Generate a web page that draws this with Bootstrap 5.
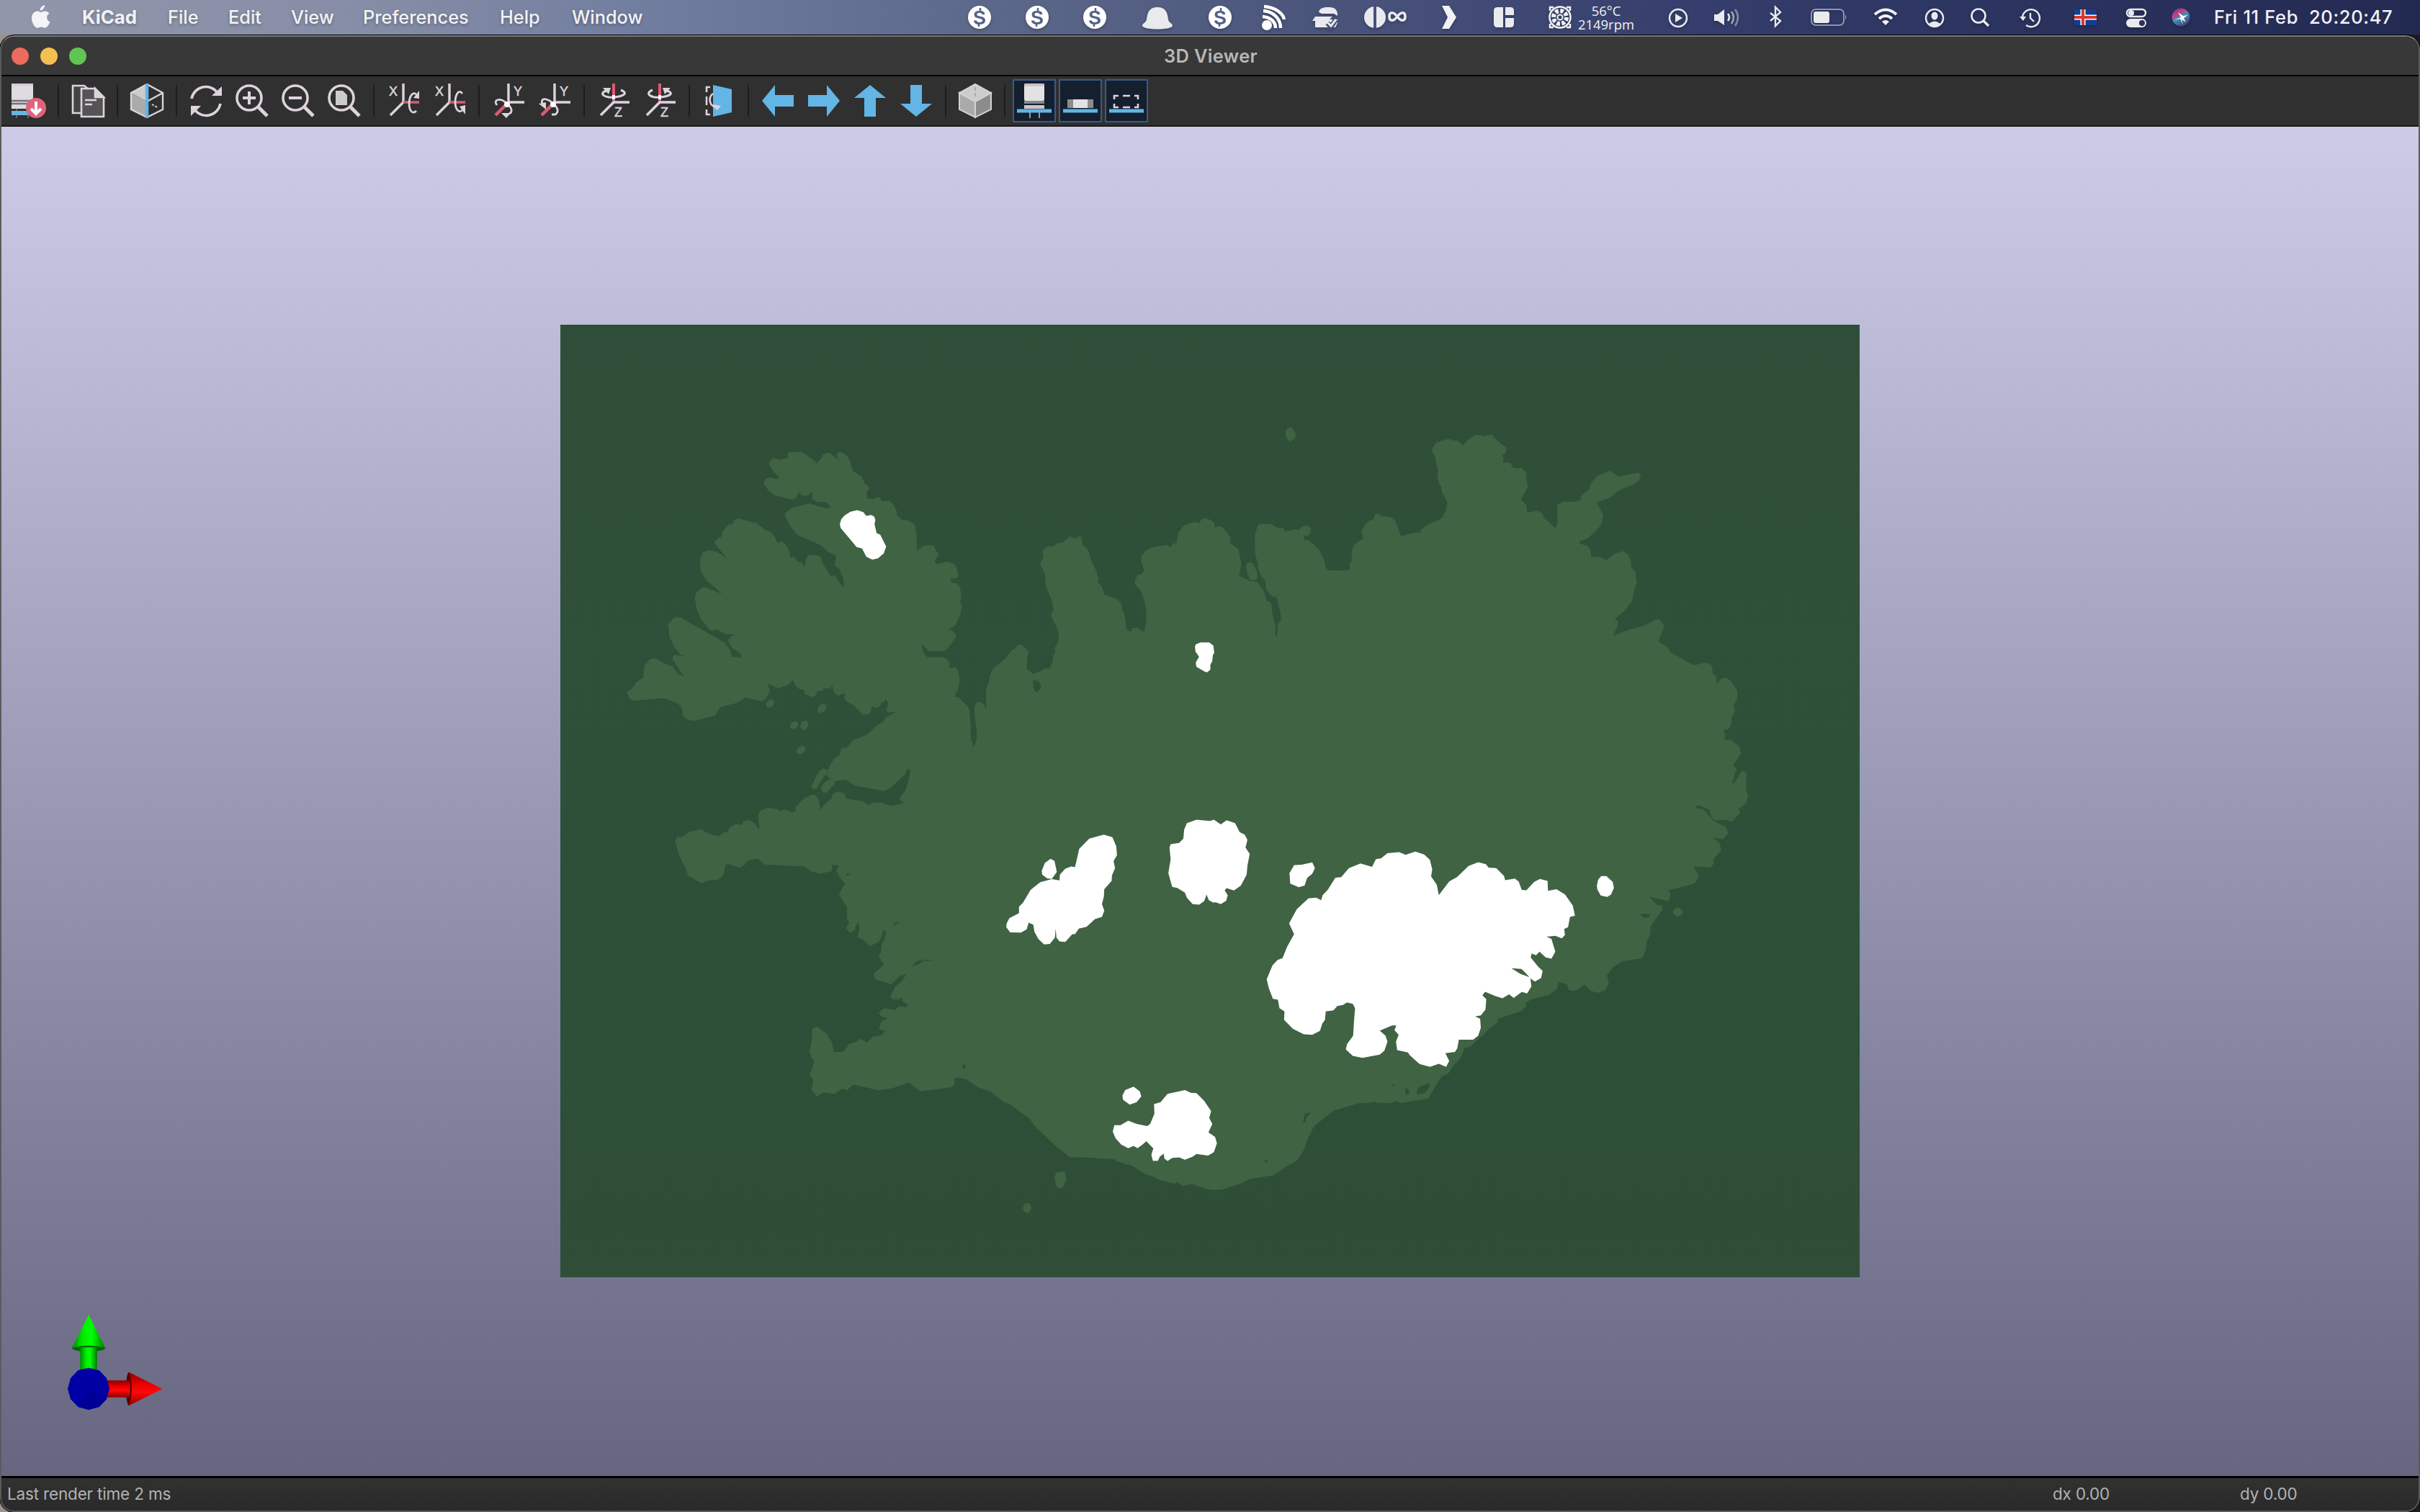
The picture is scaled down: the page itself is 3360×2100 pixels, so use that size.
<!DOCTYPE html>
<html lang="en">
<head>
<meta charset="utf-8">
<title>3D Viewer</title>
<link href="https://cdn.jsdelivr.net/npm/bootstrap@5.3.0/dist/css/bootstrap.min.css" rel="stylesheet">
<style>
html,body{height:100%;margin:0;overflow:hidden}
body{background:linear-gradient(90deg,#9a948d 0,#1c1a20 100%);font-family:Inter,"Liberation Sans",sans-serif;color:#f2f2f5;font-size:26px;line-height:1}
svg{display:block;flex:none;overflow:visible}
.menubar{height:48px;background:linear-gradient(90deg,#9196aa 0,#868da6 500px,#7480a1 840px,#5b6788 1400px,#48527a 1900px,#353e6c 2350px,#2b335f 2800px,#232a52 3360px);white-space:pre}
.menus{width:1338px;padding-left:42px;text-shadow:0 2px 4px rgba(0,0,0,.28)}
.menus span{font-size:25.3px;font-weight:500}
.m-logo{width:72px}.m-app{width:119px}.m-file{width:84px}.m-edit{width:87px}.m-view{width:100px}.m-pref{width:190px}.m-help{width:100px}
.menus .m-app{font-weight:700;font-size:25.8px}
.tray svg{width:44px;height:48px;filter:drop-shadow(0 2px 2px rgba(0,0,0,.25))}
.g18{margin-left:18px}.g19{margin-left:19px}.g23{margin-left:23px}.g24{margin-left:24px}.g26{margin-left:26px}.g28{margin-left:28px}.g30{margin-left:30px}.g33{margin-left:33px}.g34{margin-left:34px}.g35{margin-left:35px}.g36{margin-left:36px}.g41{margin-left:41px}.g42{margin-left:42px}.g43{margin-left:43px}
.fan-text{width:84px;font-size:18.4px;line-height:19px;text-align:center;font-family:"Open Sans","Noto Sans",sans-serif;font-weight:500}
.clock{margin-left:24px;font-size:25.5px;font-weight:500;letter-spacing:.65px}
.app-window{height:2051px;margin-top:1px;border:2px solid #5b5b5b;border-top-color:#7a7a7a;border-radius:20px;background:#2d2d2d;overflow:hidden;box-shadow:0 0 0 1px #000}
.titlebar{height:55px;background:#383838;border-bottom:2px solid #000;padding-left:14px}
.light{width:24px;height:24px;border-radius:50%;margin-right:16px}
.titlebar .win-title{font-size:25.5px;font-weight:600;letter-spacing:.3px;color:#b7b7b7;margin-left:auto;margin-right:auto;transform:translateX(-66px)}
.toolbar3d{height:70px;background:#303030;border-bottom:2px solid #1a1a1a;gap:16px;padding-left:14px}
.toolbar3d svg{width:48px;height:48px}
.sep{width:2px;height:44px;background:#1d1d1d}
.tgl{width:60px;height:60px;margin:0 -6px;background:#151f2e;border:2px solid #3d5a85}
.canvas3d{height:1874px;border-bottom:0;background:linear-gradient(#cccce8,#666680)}
.statusbar{flex:1;background:linear-gradient(#313132,#2a2a2a);border-top:3px solid #000;color:#b2b2b2;font-size:22.5px;padding-left:8px;letter-spacing:-.17px}
.st-main{width:2840px}.st-dx{width:260px}
</style>
<script src="https://cdn.jsdelivr.net/npm/bootstrap@5.3.0/dist/js/bootstrap.bundle.min.js"></script>
</head>
<body>
<!-- shared symbols -->
<svg width="0" height="0" class="position-absolute">
<defs>
<symbol id="skype" viewBox="-22 -24 44 48" overflow="visible"><circle r="16" fill="#fff"/><text y="9.500" text-anchor="middle" font-size="27" font-weight="700" fill="#53618a" font-family="Liberation Sans">S</text><path d="M1-13V-9M-1 9V13" stroke="#53618a" stroke-width="2.500"/></symbol>
<symbol id="rotx" viewBox="0 0 48 48"><path d="M24 0V26L6 44" fill="none" stroke="#ddd3dd" stroke-width="3.4"/><path d="M24 26H46" stroke="#de5b72" stroke-width="3.6"/><text x="4" y="17" font-size="18" fill="#ddd3dd" stroke="#ddd3dd" stroke-width=".5" font-family="Liberation Sans">X</text><path d="M42 15C36 10 32 20 32 28S36 44 42 38" fill="none" stroke="#ddd3dd" stroke-width="2.8"/><path d="M38 20L46 10V21Z" fill="#ddd3dd"/></symbol>
<symbol id="rotx2" viewBox="0 0 48 48"><path d="M24 0V26L6 44" fill="none" stroke="#ddd3dd" stroke-width="3.4"/><path d="M24 26H46" stroke="#de5b72" stroke-width="3.6"/><text x="4" y="17" font-size="18" fill="#ddd3dd" stroke="#ddd3dd" stroke-width=".5" font-family="Liberation Sans">X</text><path d="M42 14C36 6 32 18 32 26S36 42 42 37" fill="none" stroke="#ddd3dd" stroke-width="2.8"/><path d="M38 32L46 43V30Z" fill="#ddd3dd"/></symbol>
</defs>
</svg>
<div class="d-flex flex-column vh-100">
<nav class="menubar d-flex align-items-center">
 <div class="menus d-flex align-items-center">
  <div class="m-logo"><svg width="30" height="34" viewBox="0 0 30 34" fill="#f4f4f6"><path d="M20 0c.4 3.400-2.600 7.600-6.300 7.600C13.300 4.300 16.700.6 20 0zM15 10c1.500 0 3-1.600 5.700-1.600 2.200 0 4.400 1.200 5.800 3.200-5 3-4.200 9.900.9 12-1.400 3.700-4.300 8.200-7 8.200-2 0-2.800-1.200-5.200-1.200S12 31.800 10 31.800C6.400 31.800 2 24.500 2 18.200 2 12 6 8.500 9.800 8.500c2.400 0 3.900 1.500 5.200 1.500z"/></svg></div>
  <span class="m-app">KiCad</span><span class="m-file">File</span><span class="m-edit">Edit</span><span class="m-view">View</span><span class="m-pref">Preferences</span><span class="m-help">Help</span><span>Window</span>
 </div>
 <div class="tray d-flex align-items-center">
  <svg><use href="#skype"/></svg><svg class="g36"><use href="#skype"/></svg><svg class="g36"><use href="#skype"/></svg>
  <svg class="g43" viewBox="-22 -24 44 48"><path d="M0-14C11-14 14-7 15 3C16 8 21 8 21 12C18 18-18 18-21 12C-21 8-16 8-15 3C-14-7-11-14 0-14Z" fill="#e9eaee"/></svg>
  <svg class="g43"><use href="#skype"/></svg>
  <svg class="g30" viewBox="-22 -24 44 48"><g fill="none" stroke="#fff" stroke-width="4.500"><path d="M-15-1C-4 0 3 6 3 15M-14-9C0-8 10 2 10 15M-13-15C4-14 14-4 15 3" /></g><circle cx="-9" cy="11" r="7" fill="#fff"/></svg>
  <svg class="g28" viewBox="-22 -24 44 48"><path d="M-9-7C-8-14 0-14 6-14C13-14 17-10 17-4V-2L12-5H-5ZM-14-1H10L6 3H17V8L14 14H-14V5H-18Z" fill="#e9eaee"/><path d="M3 8L8 13L15 3" fill="none" stroke="#46517a" stroke-width="7"/><path d="M3 7L8 12L15 3" fill="none" stroke="#e9eaee" stroke-width="3"/></svg>
  <svg class="g41" viewBox="-22 -24 44 48"><circle cx="-16" cy="0" r="15" fill="#e9eaee"/><path d="M-16-15V15" stroke="#46517a" stroke-width="4"/><path d="M15-1C9-9 4-7 4-1S9 7 15-1S26-7 26-1S21 7 15-1Z" fill="none" stroke="#e9eaee" stroke-width="3.600"/></svg>
  <svg class="g42" viewBox="-22 -24 44 48"><path d="M-9-16H1L11 0L1 16H-9L-1 0Z" fill="#f2f2f5"/></svg>
  <svg class="g33" viewBox="-22 -24 44 48"><g fill="#e9eaee"><path d="M-9-14H-1V14H-9Q-14 14-14 9V-9Q-14-14-9-14ZM2-14H9Q14-14 14-9V-3H2ZM2 1H14V9Q14 14 9 14H2Z"/></g></svg>
  <svg class="g34" viewBox="-22 -24 44 48" fill="none" stroke="#f2f2f5"><path d="M-14-9V-14H-9M9-14H14V-9M14 9V14H9M-9 14H-14V9" stroke-width="2.500"/><circle r="14.500" stroke-width="2.500"/><circle r="9" stroke-width="6" stroke-dasharray="4.600 2.470"/><circle r="3.500" stroke-width="2"/></svg>
  <div class="fan-text"><div>56°C</div><div>2149rpm</div></div>
  <svg class="g36" viewBox="-22 -24 44 48"><circle cy="1" r="12" fill="none" stroke="#e9eaee" stroke-width="2.500"/><path d="M-4-5L6 1L-4 7Z" fill="#e9eaee"/></svg>
  <svg class="g24" viewBox="-22 -24 44 48"><path d="M-18-4H-13L-4-11V11L-13 5H-18Z" fill="#e9eaee"/><g fill="none" stroke="#e9eaee" stroke-width="2.600"><path d="M1-5Q5 0 1 5"/><path d="M6-8Q12 0 6 9" opacity=".6"/><path d="M11-11Q19 0 11 12" opacity=".45"/></g></svg>
  <svg class="g23" viewBox="-22 -24 44 48"><path d="M-7-6L7 5L0 12V-14L7-7L-7 5" fill="none" stroke="#e9eaee" stroke-width="2.400"/></svg>
  <svg class="g30" viewBox="-22 -24 44 48"><rect x="-24" y="-11" width="45" height="22" rx="6" fill="none" stroke="#9094b0" stroke-width="2"/><rect x="-21" y="-8" width="22" height="16" rx="3" fill="#e9eaee"/><path d="M23-4Q26 0 23 4Z" fill="#9094b0"/></svg>
  <svg class="g35" viewBox="-22 -24 44 48"><g fill="none" stroke="#f2f2f5" stroke-width="4"><path d="M-15-4Q0-17 15-4M-9 2Q0-6 9 2"/></g><path d="M-5 6Q0 2 5 6L0 11Z" fill="#f2f2f5"/></svg>
  <svg class="g24" viewBox="-22 -24 44 48"><circle cy="1" r="12" fill="none" stroke="#e9eaee" stroke-width="2.500"/><ellipse cy="-2" rx="4.500" ry="5.500" fill="#e9eaee"/><path d="M-8 9Q0 2 8 9Q0 16-8 9" fill="#e9eaee"/></svg>
  <svg class="g19" viewBox="-22 -24 44 48"><circle cx="-2" cy="-2" r="9.500" fill="none" stroke="#e9eaee" stroke-width="2.600"/><path d="M5 5L12 12" stroke="#e9eaee" stroke-width="3.400"/></svg>
  <svg class="g26" viewBox="-22 -24 44 48"><path d="M-11 0A12 12 0 1 1-6 11M0-6V1L5 6" fill="none" stroke="#e9eaee" stroke-width="2.400"/><path d="M-15-1H-6L-10 5Z" fill="#e9eaee"/></svg>
  <svg class="g33" viewBox="-22 -24 44 48"><path d="M-16-11H15V11H-16Z" fill="#123e93"/><path d="M-16 0H15M-4-11V11" stroke="#fff" stroke-width="7"/><path d="M-16 0H15M-4-11V11" stroke="#d7382f" stroke-width="4"/></svg>
  <svg class="g26" viewBox="-22 -24 44 48"><rect x="-13" y="-11" width="26" height="10" rx="5" fill="none" stroke="#e9eaee" stroke-width="2.500"/><circle cx="-7" cy="-6" r="4" fill="#e9eaee"/><rect x="-14" y="2" width="28" height="12" rx="6" fill="#e9eaee"/><circle cx="8" cy="8" r="4" fill="#2a315c"/></svg>
  <svg class="g18" viewBox="-22 -24 44 48"><defs><linearGradient id="siri" x1="0" y1="0" x2=".6" y2="1"><stop stop-color="#574a86"/><stop offset=".35" stop-color="#c53d78"/><stop offset=".6" stop-color="#3d8fb5"/><stop offset="1" stop-color="#45407a"/></linearGradient></defs><circle r="12.500" fill="url(#siri)"/><path d="M-10 4L0 0L-4-7L3-2L10-3L4 1L7 7L1 3L3 11L-1 2Z" fill="#eafcff"/></svg>
  <div class="clock">Fri 11 Feb  20:20:47</div>
 </div>
</nav>
<main class="app-window d-flex flex-column">
 <header class="titlebar d-flex align-items-center"><i class="light" style="background:#ed6a5e"></i><i class="light" style="background:#f5bf4f"></i><i class="light" style="background:#61c554"></i><div class="win-title">3D Viewer</div></header>
 <div class="toolbar3d d-flex align-items-center">
  <svg viewBox="0 0 48 48"><path d="M0 0H30V35H0Z" fill="#dedcde"/><path d="M0 0H30V3H0Z" fill="#d5cbd5"/><path d="M0 24H30M0 28H30" stroke="#77707a" stroke-width="2.500"/><path d="M7 35V48M23 35V48" stroke="#777" stroke-width="1.500"/><path d="M0 38H30V44H0Z" fill="#62b5e5"/><circle cx="34" cy="34" r="14" fill="#e0637c"/><path d="M34 25V41M27 35L34 42L41 35" fill="none" stroke="#fff" stroke-width="4"/></svg><div class="sep"></div>
  <svg viewBox="0 0 48 48" stroke="#ddd3dd" stroke-width="2.600"><path d="M3 3H19L25 8V41H3Z" fill="#444"/><path d="M15 7H34L46 19V46H15Z" fill="#545454"/><path d="M34 7V19H46Z" fill="#ddd3dd"/><path d="M20 23H36M20 29H30"/></svg><div class="sep"></div>
  <svg viewBox="0 0 48 48"><path d="M24 1L2 13L24 25Z" fill="#ccc"/><path d="M2 13V36L24 47V25Z" fill="#ababab"/><path d="M24 1L46 13V36L24 47M24 25L46 13M24 1L2 13V36L24 47" fill="none" stroke="#ddd3dd" stroke-width="2.400"/><path d="M31 29L38 33" stroke="#ddd3dd" stroke-width="2" stroke-dasharray="3 2"/><path d="M24 0V48" stroke="#62b5e5" stroke-width="4.500"/></svg><div class="sep"></div>
  <svg viewBox="0 0 48 48"><path d="M4 21A20 20 0 0 1 40 13M44 28A20 20 0 0 1 8 36" fill="none" stroke="#ddd3dd" stroke-width="3.600"/><path d="M46 4V17H32ZM3 45V31H17Z" fill="#ddd3dd"/></svg>
  <svg viewBox="0 0 48 48" fill="none" stroke="#ddd3dd" stroke-width="3.600"><circle cx="20" cy="20" r="17"/><path d="M32 32L45 45" stroke-width="5"/><path d="M11 20H29M20 11V29" stroke-width="4"/></svg>
  <svg viewBox="0 0 48 48" fill="none" stroke="#ddd3dd" stroke-width="3.600"><circle cx="20" cy="20" r="17"/><path d="M32 32L45 45" stroke-width="5"/><path d="M11 20H29" stroke-width="4"/></svg>
  <svg viewBox="0 0 48 48" fill="none" stroke="#ddd3dd" stroke-width="3.600"><circle cx="20" cy="20" r="17"/><path d="M32 32L45 45" stroke-width="5"/><path d="M12 10H22L28 16V30H12Z" fill="#ccc" stroke="none"/></svg><div class="sep"></div>
  <svg><use href="#rotx"/></svg><svg><use href="#rotx2"/></svg><div class="sep"></div>
  <svg viewBox="0 0 48 48"><path d="M24 0V26H46" fill="none" stroke="#ddd3dd" stroke-width="3.400"/><path d="M24 26L6 44" stroke="#de5b72" stroke-width="4.500"/><text x="31" y="17" font-size="18" fill="#ddd3dd" stroke="#ddd3dd" stroke-width=".5" font-family="Liberation Sans">Y</text><path d="M8 30C2 22 12 20 20 26S31 39 25 42" fill="none" stroke="#ddd3dd" stroke-width="2.800"/><path d="M14 41H27L21 48Z" fill="#ddd3dd"/><circle cx="22" cy="29" r="4" fill="#fff"/></svg>
  <svg viewBox="0 0 48 48"><path d="M24 0V26H46" fill="none" stroke="#ddd3dd" stroke-width="3.400"/><path d="M24 26L6 44" stroke="#de5b72" stroke-width="4.500"/><text x="31" y="17" font-size="18" fill="#ddd3dd" stroke="#ddd3dd" stroke-width=".5" font-family="Liberation Sans">Y</text><path d="M7 28C4 20 12 20 20 26S31 39 25 43H20" fill="none" stroke="#ddd3dd" stroke-width="2.800"/><path d="M2 28L12 26V36Z" fill="#ddd3dd"/><circle cx="22" cy="29" r="4" fill="#fff"/></svg><div class="sep"></div>
  <svg viewBox="0 0 48 48"><path d="M24 0V26" stroke="#de5b72" stroke-width="4"/><path d="M46 26H24L6 44" fill="none" stroke="#ddd3dd" stroke-width="3.600"/><text x="25" y="46" font-size="18" fill="#ddd3dd" stroke="#ddd3dd" stroke-width=".5" font-family="Liberation Sans">Z</text><path d="M14 10C2 14 12 20 24 19S46 14 34 9" fill="none" stroke="#ddd3dd" stroke-width="3"/><path d="M9 6H20L17 15Z" fill="#ddd3dd"/><path d="M24 16V22" stroke="#fff" stroke-width="4"/></svg>
  <svg viewBox="0 0 48 48"><path d="M24 0V26" stroke="#de5b72" stroke-width="4"/><path d="M46 26H24L6 44" fill="none" stroke="#ddd3dd" stroke-width="3.600"/><text x="25" y="46" font-size="18" fill="#ddd3dd" stroke="#ddd3dd" stroke-width=".5" font-family="Liberation Sans">Z</text><path d="M14 9C2 14 12 20 24 19S46 14 34 10" fill="none" stroke="#ddd3dd" stroke-width="3"/><path d="M39 6H28L31 15Z" fill="#ddd3dd"/><path d="M24 16V22" stroke="#fff" stroke-width="4"/></svg><div class="sep"></div>
  <svg viewBox="0 0 48 48"><path d="M16 2L42 8V40L16 46Z" fill="#62b5e5"/><path d="M12 5H7V12M7 18V30M7 36V43H12" fill="none" stroke="#ddd3dd" stroke-width="2.600"/><path d="M16 14C10 18 10 28 17 32" fill="none" stroke="#ddd3dd" stroke-width="2.600"/><path d="M16 29L27 31L22 37L18 34Z" fill="#ddd3dd"/></svg><div class="sep"></div>
  <svg viewBox="0 0 48 48"><path d="M2 24L20 2V16H46V32H20V46Z" fill="#62b5e5"/></svg>
  <svg viewBox="0 0 48 48"><path d="M46 24L28 2V16H2V32H28V46Z" fill="#62b5e5"/></svg>
  <svg viewBox="0 0 48 48"><path d="M24 2L46 20H32V46H16V20H2Z" fill="#62b5e5"/></svg>
  <svg viewBox="0 0 48 48"><path d="M24 46L46 28H32V2H16V28H2Z" fill="#62b5e5"/></svg><div class="sep"></div>
  <svg viewBox="0 0 48 48" stroke="#d8d0d8" stroke-width="2"><path d="M24 1L46 13L24 25L2 13Z" fill="#ccc"/><path d="M2 13L24 25V47L2 36Z" fill="#aaa"/><path d="M46 13L24 25V47L46 36Z" fill="#8c8c8c"/><path d="M24 5V18M9 32L18 27" stroke="#aaa" stroke-dasharray="5 3"/></svg><div class="sep"></div>
  <div class="tgl d-flex align-items-center justify-content-center"><svg viewBox="0 0 48 48"><rect x="10" width="28" height="24" rx="2" fill="#e2e2e2"/><path d="M10 2H38" stroke="#c8bfc8" stroke-width="3"/><path d="M10 26H38" stroke="#888" stroke-width="4"/><path d="M10 30H38V35H10Z" fill="#ccc5cc"/><path d="M18 40V48M31 40V48" stroke="#999" stroke-width="2"/><path d="M0 38H48" stroke="#62b5e5" stroke-width="5"/></svg></div>
  <div class="tgl d-flex align-items-center justify-content-center"><svg viewBox="0 0 48 48"><path d="M6 22H42V34H6Z" fill="#8d8d8d"/><path d="M14 22H34V34H14Z" fill="#e2e2e2"/><path d="M0 38H48" stroke="#62b5e5" stroke-width="5"/></svg></div>
  <div class="tgl d-flex align-items-center justify-content-center"><svg viewBox="0 0 48 48"><path d="M7 22V17H13M19 17H29M35 17H40V22M40 28V33H35M29 33H19M13 33H7V28" fill="none" stroke="#ddd3dd" stroke-width="2.600"/><path d="M0 38H48" stroke="#62b5e5" stroke-width="5"/></svg></div>
 </div>
 <div class="canvas3d">
 <svg width="3356" height="1874" viewBox="2 176 3356 1874">
  <defs>
   <linearGradient id="pcb" x1="0" y1="0" x2="0" y2="1"><stop stop-color="#2f4e39"/><stop offset=".5" stop-color="#2e5038"/><stop offset=".75" stop-color="#2d4f38"/><stop offset="1" stop-color="#2f4d37"/></linearGradient>
   <linearGradient id="gcone"><stop stop-color="#008a00"/><stop offset=".35" stop-color="#00ee00"/><stop offset=".6" stop-color="#00ff00"/><stop offset="1" stop-color="#007a00"/></linearGradient>
   <linearGradient id="rcone" x1="0" y1="0" x2="0" y2="1"><stop stop-color="#900000"/><stop offset=".4" stop-color="#f00000"/><stop offset=".6" stop-color="#ff0808"/><stop offset="1" stop-color="#900000"/></linearGradient>
  </defs>
  <path d="M778 451H2582V1774H778Z" fill="url(#pcb)"/>
  <g fill="#406343">
   <!-- north-west fjords -->
   <g transform="translate(860 560) scale(.35714 .38265)">
    <path d="M560 290L571 273 585 270 616 276 620 266 600 250 582 222 584 212 597 201 610 201 622 206 656 198 653 185 661 178 710 178 730 190 748 201 767 219 787 198 788 190 803 180 819 181 845 201 857 208 848 199 845 182 850 178 866 179 884 190 898 213 907 245 940 264 955 294 965 297 971 310 960 326 966 347 989 348 1003 340 1014 345 1020 357 1049 353 1063 366 1080 395 1077 406 1100 424 1113 422 1146 438 1155 470 1156 536 1182 518 1209 514 1224 518 1231 535 1242 548 1224 573 1234 584 1275 575 1300 583 1313 600 1317 628 1310 635 1286 637 1293 652 1308 652 1322 664 1330 695 1325 722 1333 736 1325 768 1308 803 1296 814 1281 819 1298 828 1311 846 1300 862 1275 892 1260 901 1202 899 1188 886 1180 876 1176 885 1186 912 1197 922 1260 922 1275 930 1284 945 1282 962 1306 958 1316 966 1323 1005 1316 1040 1302 1065 1320 1068 1335 1083 1356 1103 1362 1117 1365 1160 1367 1220 1377 1252 1390 1220 1389 1190 1380 1130 1380 1105 1388 1087 1400 1084 1415 1090 1428 1112 1425 1080 1425 1035 1434 1022 1440 990 1455 963 1500 930 1523 900 1540 888 1548 877 1568 878 1568 1250 888 1250 910 1221 955 1210 1000 1170 1028 1154 1033 1143 1078 1120 1047 1123 1036 1113 1047 1090 1034 1073 1030 1083 1017 1088 1014 1098 1000 1106 983 1100 975 1122 963 1130 946 1130 915 1100 880 1080 875 1068 877 1052 850 1062 833 1050 828 1024 818 1036 797 1034 790 1043 768 1045 765 1060 750 1067 722 1056 718 1040 700 1038 680 1020 678 1010 671 1006 658 1022 617 1035 590 1025 577 1017 585 1045 568 1075 553 1082 490 1068 458 1088 400 1100 388 1108 372 1134 290 1153 268 1150 247 1134 245 1112 228 1090 173 1070 60 1079 42 1076 28 1050 52 1032 63 1015 92 996 96 955 118 930 138 926 184 948 205 955 230 983 252 992 235 970 207 930 208 917 218 914 260 920 238 913 218 892 194 848 191 815 188 803 215 776 240 779 408 868 432 897 438 923 452 920 473 925 472 910 440 890 424 868 424 855 445 841 480 840 412 838 377 821 358 826 345 818 315 780 300 745 293 705 298 690 320 669 335 669 393 690 418 711 370 668 340 645 315 608 314 565 325 540 350 533 380 540 418 562 375 515 370 505 385 488 397 485 400 470 420 443 442 437 445 425 462 418 532 435 570 462 585 465 605 487 613 507 630 501 645 510 662 540 664 560 680 558 692 575 706 577 720 597 725 565 738 550 775 552 785 562 787 575 820 626 840 626 858 655 873 667 870 635 855 602 836 588 843 554 808 538 785 516 693 479 665 448 650 420 641 401 670 380 735 364 808 382 823 377 805 360 765 357 748 347 751 322 730 336 708 335 698 323 686 345 672 350 602 334 580 318Z"/>
    <ellipse cx="586" cy="1090" rx="17" ry="13" transform="rotate(-40 586 1090)"/><ellipse cx="787" cy="1108" rx="19" ry="14" transform="rotate(-40 787 1108)"/><ellipse cx="679" cy="1169" rx="17" ry="13" transform="rotate(-35 679 1169)"/><ellipse cx="719" cy="1169" rx="18" ry="14" transform="rotate(-50 719 1169)"/><ellipse cx="706" cy="1259" rx="18" ry="13" transform="rotate(-35 706 1259)"/>
    <path d="M745 1388L757 1374 762 1358 780 1332 795 1325 809 1333 805 1348 795 1356 775 1383 773 1394 762 1401 750 1399ZM785 1390L797 1376 815 1366 838 1371 836 1383 818 1400 808 1413 792 1413 785 1402Z"/>
   </g>
   <!-- north coast -->
   <g transform="translate(1330 580) scale(.38265 .33333)">
    <path d="M115 1080L128 1045 170 1005 195 970 210 961 213 950 225 945 243 958 254 970 256 985 252 995 250 1048 260 1055 271 1068 300 1057 316 1045 333 1044 343 1020 346 990 353 980 351 960 364 935 366 905 357 870 340 832 339 815 348 803 340 760 320 705 315 650 298 612 311 575 306 555 325 536 347 537 365 521 380 521 405 495 428 503 435 495 447 497 453 530 472 550 485 600 503 640 505 658 511 668 508 683 525 710 531 737 550 745 575 755 592 770 597 802 605 825 612 880 618 888 629 890 635 877 655 876 667 890 678 890 684 830 680 780 665 725 643 695 643 675 652 657 668 650 676 637 665 600 665 580 680 555 705 540 757 530 771 540 780 527 792 521 800 480 820 450 860 434 877 440 880 430 895 417 920 428 932 440 932 459 945 453 960 457 990 500 988 522 1018 550 1029 610 1020 659 1060 680 1085 684 1110 722 1120 762 1137 773 1143 830 1152 865 1152 908 1158 915 1160 862 1172 845 1170 810 1158 755 1150 745 1142 747 1117 715 1115 678 1102 665 1087 625 1089 610 1079 575 1077 490 1089 447 1097 443 1140 444 1158 458 1180 460 1188 475 1225 465 1240 469 1245 456 1265 450 1280 458 1280 480 1268 494 1255 492 1257 510 1275 512 1310 550 1328 590 1335 628 1347 637 1415 637 1422 630 1421 610 1428 600 1430 550 1440 527 1470 503 1465 475 1475 450 1490 432 1508 423 1512 405 1522 401 1535 411 1568 415V1700H400V1400H130Z"/>
    <path d="M1189 55L1198 42 1212 42 1227 68 1224 85 1208 99 1197 93 1189 72ZM1045 620L1050 605 1060 602 1073 610 1087 650 1086 670 1075 678 1060 675 1050 650Z"/>
   </g>
   <!-- east -->
   <g transform="translate(1900 580) scale(.35714 .54847)">
    <path d="M0 262L20 257 25 247 38 243 50 250 90 253 105 262 127 300 190 290 205 293 203 285 225 273 287 255 300 238 307 218 300 205 285 188 283 175 275 168 268 150 270 130 263 118 260 98 247 88 250 75 262 64 310 54 328 58 345 58 370 71 378 62 400 50 420 43 450 47 478 43 515 66 538 77 533 90 521 94 525 103 522 113 550 114 563 127 597 128 613 140 615 160 621 175 592 208 615 222 617 240 655 236 678 243 681 255 700 263 725 280 735 270 734 222 755 213 805 213 824 209 830 196 858 182 863 168 890 147 940 135 975 149 1050 139 1059 147 1052 158 1030 170 980 182 940 202 887 215 913 247 908 267 895 280 855 305 822 313 820 319 850 324 865 337 865 352 900 354 925 361 960 343 990 338 1010 348 1020 362 1022 380 1038 390 1043 420 1036 430 1025 465 995 490 957 510 970 515 970 525 952 552 1010 538 1070 527 1115 512 1130 511 1152 527 1127 567 1165 583 1172 593 1265 627 1315 620 1335 628 1339 648 1352 657 1354 676 1370 662 1388 658 1405 664 1434 690 1434 710 1420 728 1424 745 1412 760 1410 777 1400 788 1380 792 1387 803 1385 815 1410 817 1440 832 1449 850 1418 880 1432 890 1422 905 1422 915 1413 917 1419 928 1450 897 1460 895 1470 902 1468 943 1476 958 1468 977 1440 990 1444 1002 1412 1023 1380 1018 1350 1021 1335 1012 1325 993 1280 981 1268 989 1300 991 1345 1022 1390 1038 1399 1053 1378 1068 1340 1063 1365 1078 1372 1095 1342 1117 1342 1130 1330 1139 1265 1137 1285 1162 1268 1180 1165 1197 1174 1205 1170 1223 1155 1223 1093 1213 1122 1235 1138 1235 1144 1245 1098 1287 1095 1310 1080 1330 1080 1345 1068 1365 1055 1370 985 1377 950 1393 927 1412 935 1435 920 1450 895 1456 865 1450 840 1434 810 1450 780 1450 777 1433 738 1428 728 1443 705 1458 610 1478 613 1490 590 1503 500 1523 503 1530 465 1550 440 1568H0Z"/>
    <path d="M1183 1250L1193 1241 1212 1242 1223 1251 1216 1261 1202 1264 1186 1257Z"/>
   </g>
   <!-- west and south-west -->
   <g transform="translate(860 1020) scale(.44643 .43367)">
    <path d="M772 0L725 20 708 43 690 45 685 65 670 75 655 98 648 115 645 130 655 143 667 150 705 145 730 163 820 181 838 175 892 125 893 112 905 113 903 132 890 178 870 205 884 220 852 228 830 224 815 218 785 219 778 227 755 214 705 205 700 190 685 184 665 188 658 208 640 222 625 243 620 210 610 195 600 192 575 205 548 232 548 245 537 251 515 239 498 247 493 240 462 235 440 243 431 260 436 302 428 298 425 288 405 274 385 278 382 290 362 287 345 297 335 313 322 315 313 326 285 321 252 303 215 313 193 330 180 328 173 343 187 390 207 430 213 452 255 477 280 467 307 466 323 452 330 417 340 416 375 427 390 418 398 404 430 398 453 417 575 423 600 440 625 446 660 438 662 417 683 420 675 437 690 465 703 477 690 497 683 513 708 555 708 590 715 603 705 620 718 637 733 625 735 612 742 602 747 620 740 650 757 657 778 678 805 666 815 650 820 628 830 630 825 655 815 675 813 700 806 713 823 737 790 768 795 785 845 800 875 772 892 768 880 788 857 808 843 838 848 848 865 850 880 842 880 855 897 863 893 874 870 870 858 882 822 877 806 892 813 903 834 909 815 920 807 940 815 948 827 948 818 963 790 968 770 987 750 974 735 985 715 991 697 1017 668 1017 660 985 645 960 615 935 600 943 597 990 590 1017 605 1048 598 1075 591 1090 603 1107 597 1138 615 1160 633 1147 668 1151 695 1134 708 1140 727 1122 808 1140 850 1133 900 1115 937 1143 1035 1130 1044 1115 1040 1102 1060 1100 1080 1105 1115 1130 1155 1145 1200 1180 1210 1181 1275 1230 1290 1253 1330 1292 1350 1312 1400 1354 1445 1355 1535 1360 1568 1374V0H1113L1112 15 1101 43 1093 15V0Z"/>
    <path d="M1353 1420L1358 1404 1380 1400 1387 1405 1389 1427 1380 1450 1368 1455 1358 1445ZM1254 1517L1262 1502 1276 1502 1281 1515 1278 1528 1268 1533 1259 1529Z"/>
   </g>
   <!-- south -->
   <g transform="translate(1380 1120) scale(.53571 .35714)">
    <path d="M0 1120L30 1153 38 1155 95 1213 110 1245 145 1295 195 1363 233 1364 310 1371 320 1382 357 1397 392 1430 410 1438 430 1453 470 1467 475 1461 490 1476 512 1468 555 1489 570 1492 590 1490 635 1469 665 1448 725 1434 760 1398 785 1378 803 1338 815 1287 830 1243 880 1184 945 1154 975 1153 985 1148 995 1153 1030 1154 1040 1146 1057 1153 1125 1136 1140 1100 1160 1050 1177 1040 1187 1015 1210 978 1220 940 1235 935 1255 905 1270 880 1305 840 1307 825 1365 797 1378 780 1375 765 1395 750 1440 732 1460 708 1463 682 1485 692 1490 712 1500 718 1520 705 1530 692 1548 718 1568 725V0H0Z"/>
   </g>
  </g>
  <g fill="#2e5038">
   <path transform="translate(1380 1120) scale(.53571 .35714)" d="M1066 1090L1076 1105 1075 1120 1066 1119ZM1097 1098L1110 1085 1130 1077 1128 1095 1113 1117 1097 1120ZM806 1195L821 1190 808 1215 808 1230 801 1228ZM697 1370L710 1380 706 1386ZM1031 1082L1038 1080 1035 1090Z"/>
   <path transform="translate(1900 580) scale(.35714 .54847)" d="M1055 1256L1095 1257 1090 1264 1072 1268ZM1310 1056L1325 1058 1315 1058Z"/>
   <path transform="translate(860 1020) scale(.44643 .43367)" d="M702 447L718 446 716 450 708 452ZM845 618L860 601 875 601 862 607ZM908 742L925 726 950 721 985 725 945 725 928 738ZM1065 1066L1076 1053 1075 1072Z"/>
   <path d="M1434 944L1443 947 1446 955 1439 962 1435 956Z"/>
  </g>
  <!-- glaciers -->
  <g fill="#fff">
   <path transform="translate(860 560) scale(.35714 .38265)" d="M857 440L862 422 875 408 898 394 925 388 948 395 960 409 978 406 990 411 995 422 992 440 1000 472 1014 477 1037 520 1028 545 1005 563 983 568 960 557 943 527 922 522 900 497 860 453Z"/>
   <path transform="translate(1330 580) scale(.38265 .33333)" d="M860 955L863 945 880 937 912 937 927 950 930 980 925 990 923 1015 916 1030 916 1050 905 1061 895 1058 865 1038 863 1020 875 997 862 975Z"/>
   <path transform="translate(1900 580) scale(.35714 .54847)" d="M888 1185L893 1170 905 1161 925 1161 950 1176 954 1191 943 1208 928 1214 903 1210 890 1195Z"/>
   <path transform="translate(1380 1120) scale(.53571 .35714)" d="M33 455L40 435 65 415 65 390 75 375 95 325 120 295 150 283 170 288 171 265 185 242 200 234 210 236 215 205 221 165 247 125 285 110 307 120 317 155 319 190 310 213 314 240 306 268 305 290 286 322 285 350 280 380 286 405 280 430 262 438 240 468 220 475 210 497 203 497 185 527 170 525 162 510 160 475 158 510 145 535 130 537 115 515 105 488 102 460 90 452 85 478 70 491 42 490 32 470ZM124 250L132 220 147 204 157 212 163 255 150 282 138 280 125 265ZM491 125L493 90 500 65 525 52 560 57 570 52 588 70 603 54 625 65 637 100 650 110 657 130 652 160 663 185 657 230 655 265 640 308 622 327 603 318 598 327 606 345 602 367 588 380 575 373 568 374 557 365 551 343 545 368 532 382 515 380 500 355 495 335 475 317 462 313 452 260 458 205 455 160 458 147 480 142ZM766 260L778 228 797 227 825 218 832 240 825 262 812 278 805 308 790 314 768 300ZM848 365L852 345 865 325 885 277 900 275 920 240 950 222 980 235 990 205 1003 202 1020 182 1050 178 1067 188 1092 176 1115 187 1130 208 1136 245 1133 272 1148 305 1153 345 1180 292 1200 275 1230 232 1255 217 1275 225 1282 238 1302 240 1322 270 1325 287 1350 281 1360 292 1368 325 1380 326 1400 294 1415 282 1435 290 1436 328 1458 322 1480 342 1500 385 1506 425 1493 430 1488 470 1478 477 1480 500 1472 513 1455 503 1432 507 1445 515 1455 565 1445 592 1430 587 1414 565 1405 579 1394 572 1391 587 1410 622 1422 640 1418 668 1402 681 1393 672 1375 643 1367 632 1341 629 1365 652 1390 665 1393 700 1382 727 1368 722 1347 745 1335 731 1318 746 1300 738 1273 721 1266 735 1276 750 1274 790 1262 813 1247 817 1260 825 1262 860 1255 892 1242 907 1205 907 1201 940 1195 955 1170 960 1180 990 1172 1013 1153 1001 1130 1013 1103 1002 1078 968 1073 957 1045 948 1042 915 1049 888 1038 870 1043 852 1032 852 1000 872 1015 892 1020 915 1012 950 1000 965 955 978 930 970 912 945 915 925 931 892 933 840 936 785 930 768 915 762 905 772 890 776 880 793 860 797 858 830 851 845 845 873 825 888 803 886 775 865 752 830 753 797 740 785 736 752 723 748 712 705 707 672 722 618 735 597 748 590 760 545 778 497 765 455 785 400 815 358 835 355ZM413 1330L395 1302 385 1315 372 1329 362 1320 348 1329 330 1315 315 1290 308 1265 312 1240 328 1240 348 1222 370 1235 397 1243 405 1235 416 1195 415 1158 432 1150 450 1118 495 1103 510 1114 525 1115 545 1145 563 1185 558 1212 566 1235 556 1268 573 1285 578 1310 570 1345 555 1358 525 1352 515 1362 495 1374 480 1365 462 1367 450 1379 442 1370 440 1350 430 1362 425 1378 412 1378 408 1355ZM333 1125L340 1103 362 1090 378 1108 382 1128 370 1150 352 1160 335 1142Z"/>
  </g>
  <!-- orientation gizmo -->
  <g transform="translate(60 1800) scale(.33333)">
   <path d="M154 210H224V320H154Z" fill="url(#gcone)"/><ellipse cx="189" cy="218" rx="69" ry="13" fill="#006400"/><path d="M154 214H224V250H154Z" fill="url(#gcone)"/><path d="M189 78L259 217Q189 195 119 217Z" fill="url(#gcone)"/>
   <path d="M255 352H362V422H255Z" fill="url(#rcone)"/><ellipse cx="357" cy="387" rx="12" ry="70" fill="#5a0000"/><path d="M340 352H362V422H340Z" fill="url(#rcone)"/><path d="M496 387L357 317Q382 387 357 457Z" fill="url(#rcone)"/>
   <path d="M189 299L233 310 264 342 276 387 264 430 233 462 189 474 145 462 114 430 102 387 114 342 145 310Z" fill="#0000a4"/><path d="M189 387L264 430 233 462 189 474 145 462Z" fill="#000098"/>
  </g>
 </svg>
 </div>
 <footer class="statusbar d-flex align-items-center"><span class="st-main">Last render time 2 ms</span><span class="st-dx">dx 0.00</span><span>dy 0.00</span></footer>
</main>
</div>
</body>
</html>
